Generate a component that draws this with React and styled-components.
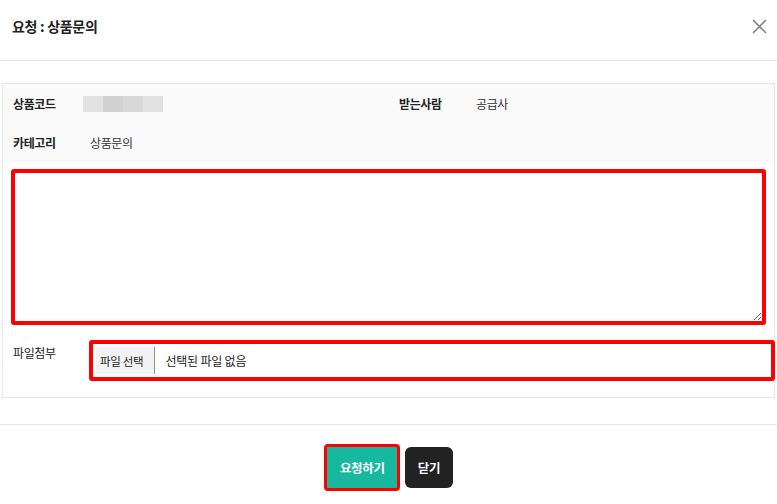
import React from "react";
import styled, { createGlobalStyle } from "styled-components";

const GlobalStyle = createGlobalStyle`
  body {
    margin: 0;
    background: #fff;
    font-family: "Noto Sans CJK KR", "Noto Sans", sans-serif;
    color: #222;
  }
`;

const Modal = styled.div`
  width: 777px;
  height: 504px;
  background: #fff;
  display: flex;
  flex-direction: column;
`;

const Header = styled.div`
  height: 61px;
  box-sizing: border-box;
  padding: 0 10px 8px 12px;
  display: flex;
  align-items: center;
  justify-content: space-between;
  border-bottom: 1px solid #e6e6e6;
`;

const Title = styled.h2`
  margin: 0;
  font-size: 14px;
  font-weight: 700;
  color: #222;
  letter-spacing: -0.3px;
`;

const CloseButton = styled.button`
  border: none;
  background: none;
  padding: 0;
  width: 16px;
  height: 16px;
  display: flex;
  align-items: center;
  justify-content: center;
  cursor: pointer;
`;

const Body = styled.div`
  padding: 22px 2px 0;
`;

const Panel = styled.div`
  border: 1px solid #e8e8e8;
  padding-bottom: 16px;
`;

const InfoTable = styled.div`
  background: #fafafa;
  display: grid;
  grid-template-columns: 396px 1fr;
  grid-auto-rows: 39px;
`;

const Field = styled.div`
  display: flex;
  align-items: center;
  padding-left: ${(p) => p.$pad ?? 10}px;
  font-size: 12px;
`;

const Label = styled.span`
  width: 77px;
  flex-shrink: 0;
  font-weight: 700;
  color: #222;
  letter-spacing: -0.4px;
`;

const Value = styled.span`
  color: #333;
  letter-spacing: -0.4px;
`;

const Blur = styled.div`
  display: flex;
  margin-left: -7px;
  height: 16px;
`;

const BlurBlock = styled.span`
  width: 20px;
  height: 16px;
  background: ${(p) => p.$c};
`;

const TextArea = styled.textarea`
  display: block;
  box-sizing: border-box;
  margin: 7px 8px 0;
  width: calc(100% - 16px);
  height: 156px;
  border: 4px solid #f00;
  border-radius: 3px;
  resize: vertical;
  outline: none;
  font-family: inherit;
`;

const FileRow = styled.div`
  display: flex;
  align-items: flex-start;
  margin-top: 15px;
  padding-left: 10px;
  margin-right: -1px;
`;

const FileLabel = styled.span`
  width: 76px;
  flex-shrink: 0;
  font-size: 12px;
  color: #222;
  margin-top: 4px;
  letter-spacing: -0.4px;
`;

const FileBox = styled.label`
  flex: 1;
  height: 41px;
  box-sizing: border-box;
  border: 4px solid #f00;
  border-radius: 3px;
  display: flex;
  align-items: stretch;
  padding: 3px;
  font-size: 11.5px;
  cursor: pointer;
`;

const FileButton = styled.span`
  display: flex;
  align-items: center;
  padding: 0 11px 0 4px;
  background: #f2f2f2;
  border-right: 1px solid #8f8f8f;
  color: #222;
  letter-spacing: -0.3px;
`;

const FileName = styled.span`
  display: flex;
  align-items: center;
  padding-left: 10px;
  font-size: 12px;
  color: #222;
  letter-spacing: -0.2px;
`;

const Footer = styled.div`
  margin-top: 26px;
  border-top: 1px solid #e6e6e6;
  padding-top: 19px;
  display: flex;
  justify-content: center;
  align-items: center;
  gap: 5px;
`;

const Button = styled.button`
  height: ${(p) => (p.$outlined ? 47 : 41)}px;
  padding: 0 12.5px;
  border: ${(p) => (p.$outlined ? "3px solid #f00" : "none")};
  border-radius: ${(p) => (p.$outlined ? 4 : 6)}px;
  background: ${(p) => p.$bg};
  color: #fff;
  font-family: inherit;
  font-size: 12.5px;
  font-weight: 700;
  letter-spacing: -0.3px;
  cursor: pointer;
`;

const blurColors = ["#e2e2e2", "#d2d2d2", "#d8d8d8", "#e1e1e1"];

export default function App() {
  return (
    <>
      <GlobalStyle />
      <Modal>
        <Header>
          <Title>요청 : 상품문의</Title>
          <CloseButton aria-label="닫기">
            <svg width="15" height="15" viewBox="0 0 15 15">
              <path d="M1 1 L14 14 M14 1 L1 14" stroke="#7a7a7a" strokeWidth="1.5" fill="none" />
            </svg>
          </CloseButton>
        </Header>
        <Body>
          <Panel>
            <InfoTable>
              <Field>
                <Label>상품코드</Label>
                <Blur>
                  {blurColors.map((c, i) => (
                    <BlurBlock key={i} $c={c} />
                  ))}
                </Blur>
              </Field>
              <Field $pad={0}>
                <Label>받는사람</Label>
                <Value>공급사</Value>
              </Field>
              <Field>
                <Label>카테고리</Label>
                <Value>상품문의</Value>
              </Field>
              <Field />
            </InfoTable>
            <TextArea />
            <FileRow>
              <FileLabel>파일첨부</FileLabel>
              <FileBox>
                <FileButton>파일 선택</FileButton>
                <FileName>선택된 파일 없음</FileName>
              </FileBox>
            </FileRow>
          </Panel>
        </Body>
        <Footer>
          <Button $outlined $bg="#17b89f">요청하기</Button>
          <Button $bg="#222">닫기</Button>
        </Footer>
      </Modal>
    </>
  );
}
